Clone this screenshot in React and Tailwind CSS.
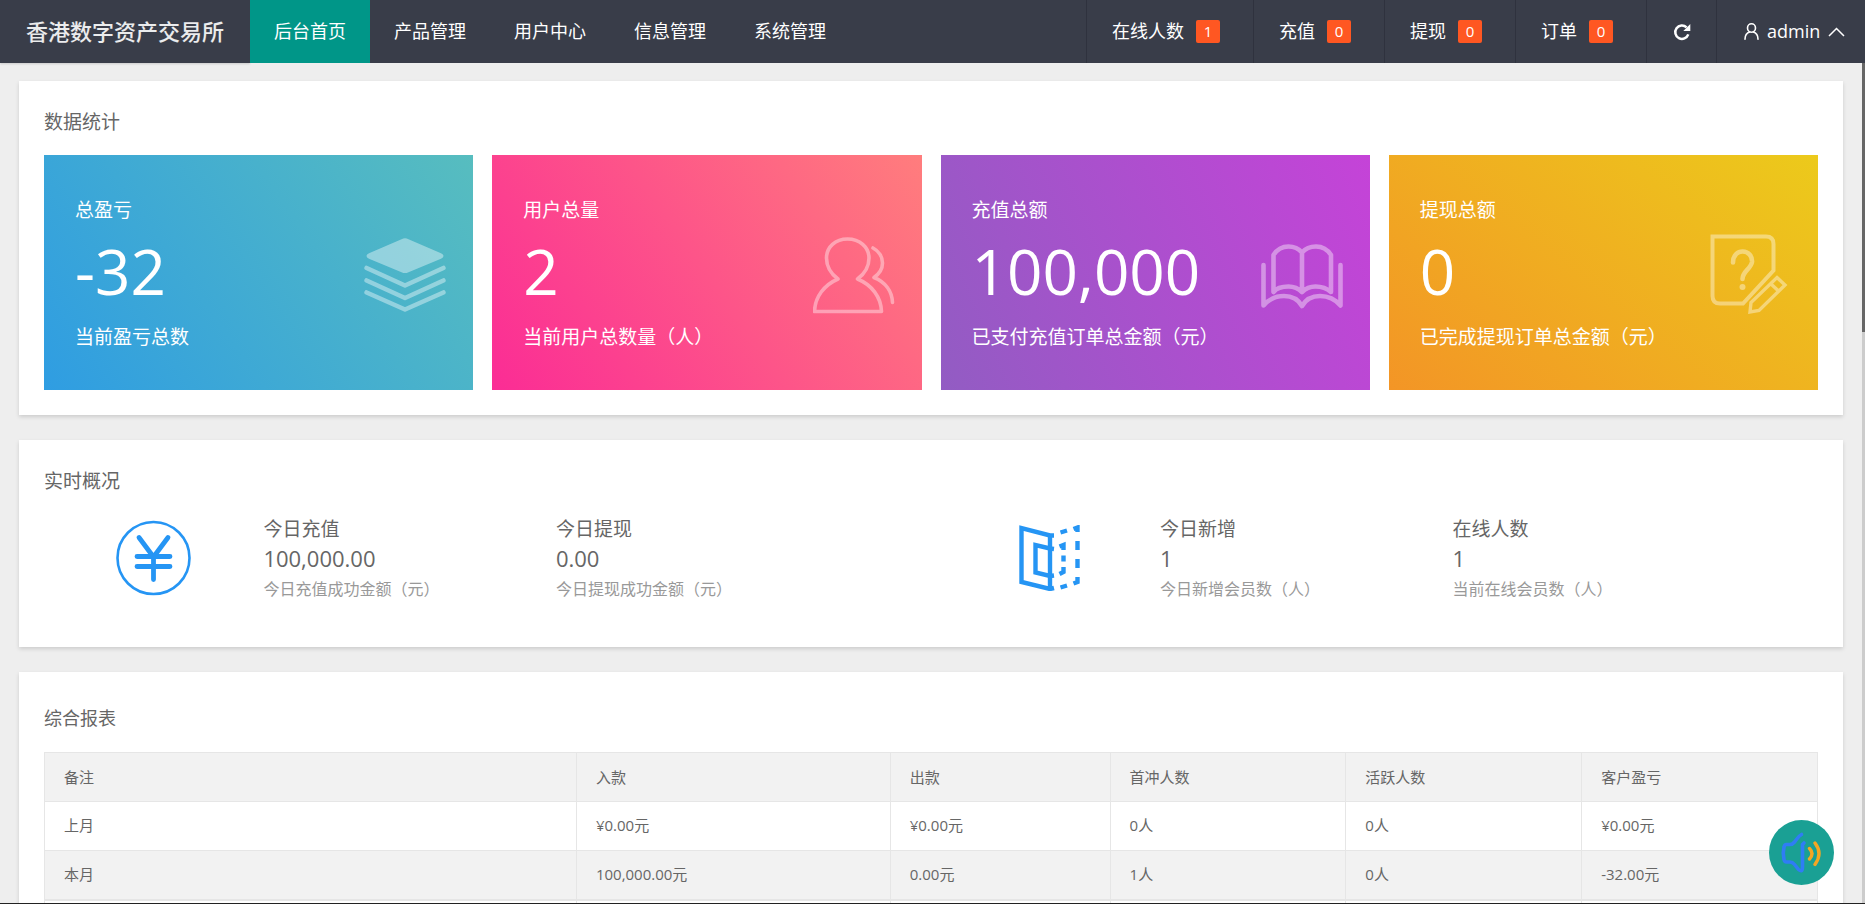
const NAV = ['后台首页', '产品管理', '用户中心', '信息管理', '系统管理'];

const COUNTERS = [
  { label: '在线人数', value: 1 },
  { label: '充值', value: 0 },
  { label: '提现', value: 0 },
  { label: '订单', value: 0 },
];

const line = { fill: 'none', stroke: 'currentColor', strokeLinecap: 'round', strokeLinejoin: 'round' };

function LayersIcon() {
  return (
    <svg viewBox="0 0 82 82" className="size-[82px] shrink-0 text-white/40" aria-hidden="true">
      <path
        d="M37.5 7.2Q41 5.2 44.5 7.2L77 21.2Q82 23.8 77 26.8L44.5 40.2Q41 42 37.5 40.2L5 26.8Q0 23.8 5 21.2Z"
        fill="currentColor"
      />
      <path d="M2.6 36L41 53.5L79.4 36M2.6 48.5L41 66L79.4 48.5M2.6 60.5L41 77.5L79.4 60.5" {...line} strokeWidth="4.6" />
    </svg>
  );
}

function UsersIcon() {
  return (
    <svg viewBox="0 0 82 82" className="size-[82px] shrink-0 text-white/40" aria-hidden="true">
      <g {...line} strokeWidth="3.6">
        <path d="M25 47C17.500 41.500 13.500 34 13.500 26C13.500 15 22.500 7 34.500 7S56 15 56 26C56 34 52 41.500 44.500 47C59 53 68 65 68.500 79.500H1.500C2 65 11 53 25 47Z" />
        <path d="M60 16C66 19 69.500 25 69.500 31C69.500 37 66 42 61 45.500C72 50 79 59 79.500 70.500" />
      </g>
    </svg>
  );
}

function BookIcon() {
  return (
    <svg viewBox="0 0 82 82" className="size-[82px] shrink-0 text-white/40" aria-hidden="true">
      <path
        d="M12.500 60V23C16 17.500 21 14.500 27.500 14.500S38 17 41 20.500C44 17 48 14.500 55 14.500S66.500 17.500 70 23V60C65 55.500 60 54.500 54.500 54.500S44 57 41 60C38 57 33 54.500 27.500 54.500S16 55.500 12.500 60ZM41 21V59M2.500 33V73.500C8 67 15 64 23 64S37 67 41 74C45 67 51 64 59 64S74 67 79.500 73.500V33"
        {...line}
        strokeWidth="4.6"
      />
    </svg>
  );
}

function NoteIcon() {
  return (
    <svg viewBox="0 0 82 82" className="size-[82px] shrink-0 text-white/40" aria-hidden="true">
      <g fill="none" stroke="currentColor" strokeWidth="4">
        <path d="M3.500 4.500H57Q64.500 4.500 64.500 12V38.500L34 71.500H11Q3.500 71.500 3.500 64Z" />
        <path d="M68 45.500L76 53L50 78.500L41 80L42 70.500ZM61.500 51.500L69.500 59" strokeWidth="3.400" />
        <path d="M24 30.500C24 15 44 17 43 30C42 37 33.500 39 33.500 47" strokeWidth="4.600" strokeLinecap="round" />
      </g>
      <circle cx="33.500" cy="55" r="3" fill="currentColor" />
    </svg>
  );
}

const TILES = [
  {
    title: '总盈亏',
    value: '-32',
    note: '当前盈亏总数',
    Icon: LayersIcon,
    bg: 'bg-[linear-gradient(-125deg,#57bdbf,#2f9de2)]',
  },
  {
    title: '用户总量',
    value: '2',
    note: '当前用户总数量（人）',
    Icon: UsersIcon,
    bg: 'bg-[linear-gradient(-125deg,#ff7d7d,#fb2c95)]',
  },
  {
    title: '充值总额',
    value: '100,000',
    note: '已支付充值订单总金额（元）',
    Icon: BookIcon,
    bg: 'bg-[linear-gradient(-113deg,#c543d8,#925cc3)]',
  },
  {
    title: '提现总额',
    value: '0',
    note: '已完成提现订单总金额（元）',
    Icon: NoteIcon,
    bg: 'bg-[linear-gradient(-141deg,#ecca1b,#f39526)]',
  },
];

function YenIcon() {
  return (
    <svg viewBox="0 0 76 76" className="size-[76px] text-[#2595f4]" aria-hidden="true">
      <circle cx="37.500" cy="38" r="36" fill="none" stroke="currentColor" strokeWidth="2.600" />
      <path d="M23 17.500L37.500 37L52 17.500M37.500 37V59.500M21 36.500H54M21 46.500H54" {...line} strokeWidth="4.800" />
    </svg>
  );
}

function DoorIcon() {
  return (
    <svg viewBox="0 0 62 66" className="h-[66px] w-[62px] text-[#2595f4]" aria-hidden="true">
      <g fill="none" stroke="currentColor" strokeWidth="4.400">
        <path d="M35 10.500L31 10.500L2.500 3V57L31 64L35 63" />
        <path d="M31 10V64" />
        <path d="M35 24L31 23.500L16.500 20V47.500L31 51L35 50.500" />
        <path d="M41.500 7.500L48 5.500M54.500 4L58.500 2.500V7M58.500 16V25M58.500 34V43M58.500 52V57L54.500 58.500M48 60.500L41.500 62.500" />
        <path d="M40.500 21.500L44.500 20V25M44.500 30.500V36.500M44.500 42V47L40.500 49" />
      </g>
    </svg>
  );
}

const OVERVIEW = [
  {
    Icon: YenIcon,
    stats: [
      { title: '今日充值', value: '100,000.00', note: '今日充值成功金额（元）' },
      { title: '今日提现', value: '0.00', note: '今日提现成功金额（元）' },
    ],
  },
  {
    Icon: DoorIcon,
    stats: [
      { title: '今日新增', value: '1', note: '今日新增会员数（人）' },
      { title: '在线人数', value: '1', note: '当前在线会员数（人）' },
    ],
  },
];

const COLUMNS = [
  { label: '备注', width: 'w-[30%]' },
  { label: '入款', width: 'w-[17.7%]' },
  { label: '出款', width: 'w-[12.4%]' },
  { label: '首冲人数', width: 'w-[13.3%]' },
  { label: '活跃人数', width: 'w-[13.3%]' },
  { label: '客户盈亏', width: 'w-[13.3%]' },
];

const ROWS = [
  ['上月', '¥0.00元', '¥0.00元', '0人', '0人', '¥0.00元'],
  ['本月', '100,000.00元', '0.00元', '1人', '0人', '-32.00元'],
];

function Header() {
  return (
    <header className="flex h-[63px] shrink-0 items-stretch justify-between bg-[#393d49] text-[18px] leading-[63px] whitespace-nowrap text-white">
      <div className="flex">
        <h1 className="w-[250px] text-center text-[22px] font-medium text-white/90 shadow-[0_1px_2px_rgba(0,0,0,0.15)]">
          香港数字资产交易所
        </h1>
        <nav className="flex">
          {NAV.map((item, i) => (
            <a key={item} href="#" className={i === 0 ? 'w-[120px] bg-[#009688] text-center' : 'w-[120px] text-center'}>
              {item}
            </a>
          ))}
        </nav>
      </div>
      <div className="flex">
        {COUNTERS.map(({ label, value }) => (
          <a key={label} href="#" className="flex items-center gap-3 border-l border-[#2f323e] pr-[33px] pl-[25px]">
            {label}
            <span className="h-[23px] w-6 rounded-xs bg-[#ff5722] text-center text-[15px] leading-[23px]">{value}</span>
          </a>
        ))}
        <button type="button" aria-label="刷新" className="flex w-[70px] items-center justify-center border-l border-[#2f323e]">
          <svg viewBox="0 0 18 18" className="size-[18px]" aria-hidden="true">
            <path d="M15.300 11.400A6.700 6.700 0 1 1 13.600 4.300" fill="none" stroke="currentColor" strokeWidth="2.500" />
            <path d="M17.300 1V8H10.300Z" fill="currentColor" />
          </svg>
        </button>
        <button type="button" className="flex w-[149px] items-center gap-2 border-l border-[#2f323e] pl-[27px] font-medium">
          <svg viewBox="0 0 15 17" className="h-[17px] w-[15px]" aria-hidden="true">
            <g fill="none" stroke="currentColor" strokeWidth="1.600" strokeLinecap="round">
              <ellipse cx="7.500" cy="5" rx="4" ry="4.200" />
              <path d="M1 16.200C1 12 3 9.800 5.800 9M14 16.200C14 12 12 9.800 9.200 9" />
            </g>
          </svg>
          admin
          <svg viewBox="0 0 17 10" className="h-[10px] w-[17px]" aria-hidden="true">
            <path d="M1 9L8.500 1.500L16 9" fill="none" stroke="currentColor" strokeWidth="1.500" />
          </svg>
        </button>
      </div>
    </header>
  );
}

function Card({ className, children }) {
  return <section className={`bg-white px-[25px] shadow-[0_2px_4px_rgba(0,0,0,0.14)] ${className}`}>{children}</section>;
}

export default function App() {
  return (
    <div className="flex h-screen flex-col overflow-hidden border-b border-[#222] bg-[#eee] font-['Open_Sans','Noto_Sans_CJK_SC',sans-serif] text-[#666]">
      <Header />
      <div className="flex min-h-0 flex-1">
        <main className="flex min-w-0 flex-1 flex-col gap-[25px] overflow-hidden px-[19px] pt-[18px]">
          <Card className="shrink-0 pt-[26px] pb-[25px]">
            <h2 className="mb-[18px] text-[19px] leading-[30px]">数据统计</h2>
            <div className="grid grid-cols-4 gap-[19px]">
              {TILES.map(({ title, value, note, Icon, bg }) => (
                <article key={title} className={`flex h-[235px] items-center justify-between pr-[27px] pl-[31px] text-white ${bg}`}>
                  <div className="text-[19px] leading-[30px] whitespace-nowrap">
                    <h3 className="pt-px">{title}</h3>
                    <p className="pt-1.5 pb-[11px] text-[62px] leading-[80px]">{value}</p>
                    <p>{note}</p>
                  </div>
                  <Icon />
                </article>
              ))}
            </div>
          </Card>

          <Card className="shrink-0 pt-[26px] pb-[43px]">
            <h2 className="mb-[18px] text-[19px] leading-[30px]">实时概况</h2>
            <div className="grid grid-cols-2 gap-[19px]">
              {OVERVIEW.map(({ Icon, stats }, i) => (
                <div key={i} className="grid grid-cols-[3fr_4fr_5fr]">
                  <div className="flex h-[87px] items-center justify-center">
                    <Icon />
                  </div>
                  {stats.map(({ title, value, note }) => (
                    <div key={title} className="whitespace-nowrap">
                      <h3 className="text-[19px] leading-[30px]">{title}</h3>
                      <p className="pb-0.5 text-[22px] leading-[28px]">{value}</p>
                      <p className="text-base leading-[30px] text-[#999]">{note}</p>
                    </div>
                  ))}
                </div>
              ))}
            </div>
          </Card>

          <Card className="shrink-0 pt-[31px] pb-[25px]">
            <h2 className="mb-[19px] text-[18px] leading-[30px]">综合报表</h2>
            <table className="w-full table-fixed border-collapse text-left text-[15px] leading-6">
              <thead>
                <tr className="h-[49px] bg-[#f2f2f2]">
                  {COLUMNS.map(({ label, width }) => (
                    <th key={label} className={`border border-[#e6e6e6] px-[19px] font-normal ${width}`}>
                      {label}
                    </th>
                  ))}
                </tr>
              </thead>
              <tbody>
                {ROWS.map((row, r) => (
                  <tr key={row[0]} className={r % 2 ? 'h-[49px] border-b-2 border-[#e6e6e6] bg-[#f2f2f2]' : 'h-[49px]'}>
                    {row.map((cell, c) => (
                      <td key={c} className="border-x border-t border-[#e6e6e6] px-[19px] pb-0.5">
                        {cell}
                      </td>
                    ))}
                  </tr>
                ))}
                <tr className="h-[49px]">
                  {COLUMNS.map(({ label }) => (
                    <td key={label} className="border-x border-b border-[#e6e6e6]" />
                  ))}
                </tr>
              </tbody>
            </table>
          </Card>
        </main>
        <div className="w-[3px] bg-[#ccc]">
          <div className="h-[32%] bg-[#666]" />
        </div>
      </div>
      <button
        type="button"
        aria-label="声音提醒"
        className="fixed right-[31px] bottom-[19px] flex size-[65px] items-center justify-center rounded-full bg-[#1aa094]"
      >
        <svg viewBox="0 0 44 44" className="size-[44px]" aria-hidden="true">
          <g fill="none" strokeLinecap="round" strokeLinejoin="round">
            <path
              d="M21.500 3.500C18.500 5 17 8 14.500 11Q12.500 13.500 10 13.500H6.500Q4.500 13.500 4 16Q2.500 22 4 28.500Q4.500 31 6.500 31H10Q12.500 31 14.500 33.500L18.500 38.500Q22.500 42 22.500 36V13.500L24 12"
              stroke="#2f7df4"
              strokeWidth="3.600"
            />
            <path d="M29.500 17.500Q34.500 22.500 29.500 28M35 12Q43 22.500 35 33.500" stroke="#f5a623" strokeWidth="3.400" />
          </g>
        </svg>
      </button>
    </div>
  );
}
